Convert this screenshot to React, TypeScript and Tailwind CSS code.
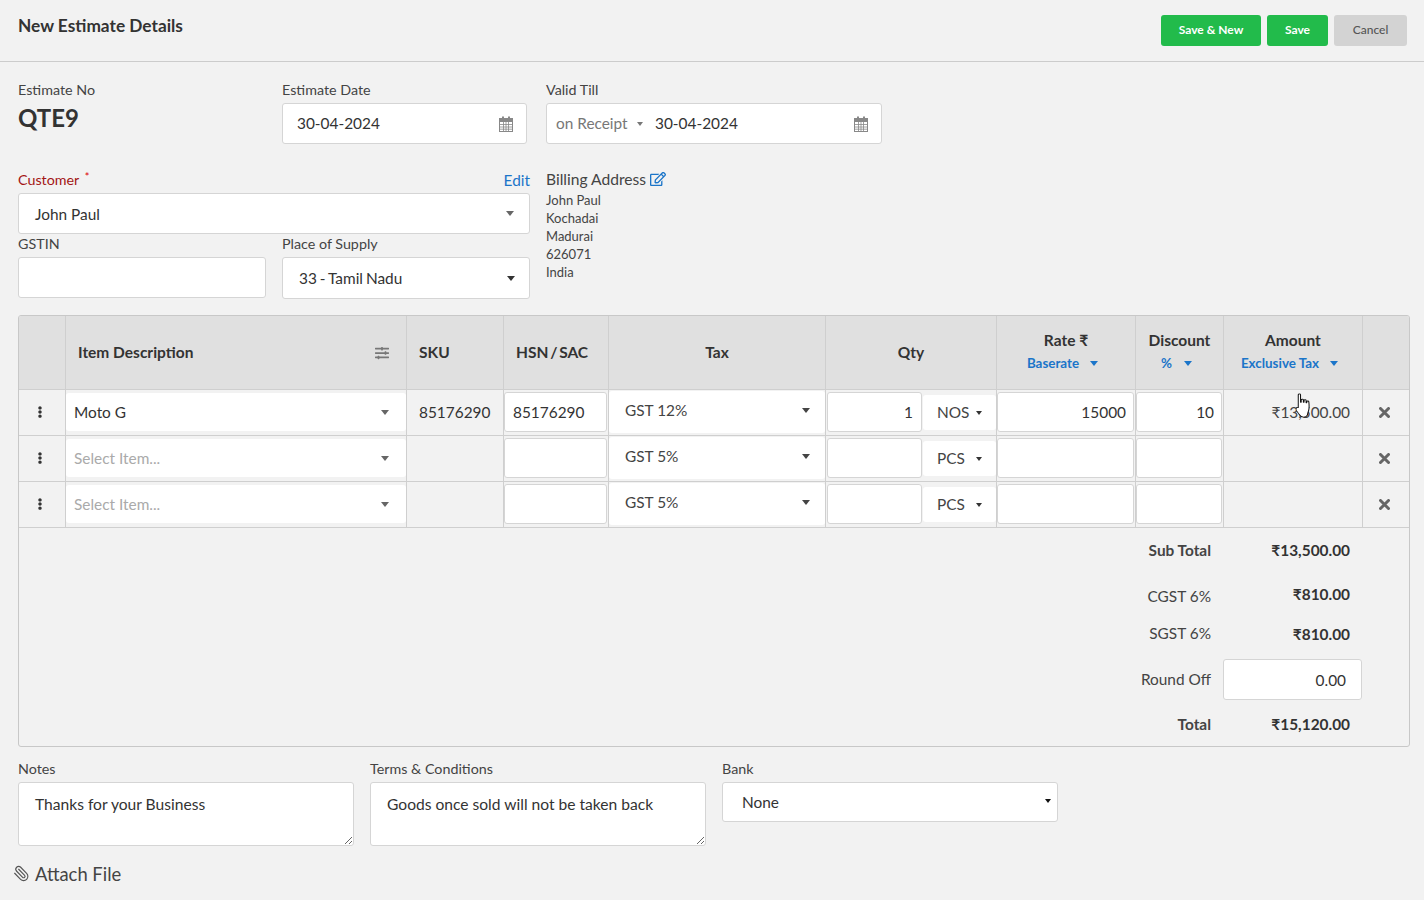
import { ReactNode } from 'react';
import { Paperclip } from 'lucide-react';
import { FaEllipsisV, FaRegEdit, FaSlidersH } from 'react-icons/fa';

const gridCols = 'grid grid-cols-[47px_341px_97px_105px_217px_171px_139px_88px_139px_46px]';
const inputBox = 'bg-white border border-[#d5d5d5] rounded-[3px] outline-none text-[15.4px] text-[#333]';
const bigCaret = 'border-x-[4.5px] border-t-[5px]';
const smallCaret = 'border-x-[3.5px] border-t-[4px]';

const Caret = ({ className }: { className: string }) => (
  <span className={`inline-block w-0 h-0 border-x-transparent ${className}`} />
);

const CalendarIcon = () => (
  <svg width="14" height="16" viewBox="0 0 14 16" className="text-[#888]">
    <rect x="0.5" y="2.5" width="13" height="13" fill="#fff" stroke="currentColor" />
    <rect x="0.5" y="2.5" width="13" height="3" fill="currentColor" stroke="currentColor" />
    <rect x="3" y="0.5" width="2" height="4" fill="currentColor" />
    <rect x="9" y="0.5" width="2" height="4" fill="currentColor" />
    <path d="M4.5 6v9M7 6v9M9.5 6v9M1 8.5h12M1 11h12M1 13.2h12" stroke="currentColor" strokeWidth="0.8" fill="none" />
  </svg>
);

const CloseIcon = () => (
  <svg width="11" height="11" viewBox="0 0 11 11">
    <path d="M1.500 1.500 9.500 9.500M9.500 1.500 1.500 9.500" stroke="#666" strokeWidth="3" strokeLinecap="round" fill="none" />
  </svg>
);

const HandCursor = () => (
  <svg width="17" height="25" viewBox="0 0 15 27" preserveAspectRatio="none" className="absolute left-[1296px] top-[393px]">
    <path
      d="M2 2c0-1.300 2-1.300 2 0v8h.6V7.500c0-1.200 1.900-1.200 1.900 0V10h.6V8c0-1.200 1.800-1.200 1.800 0v2.500h.6V9.500c0-1.200 1.800-1.200 1.800 0 .3 3 .4 7-.2 9.500-.3 1.300-.8 3-1 4.500-.3 1.500-1.500 2.500-3.500 2.500-2.200 0-3-1.200-3.600-2.500-.8-1.700-1.800-3-3-5C-.2 16.500.6 14.800 2 15.700V2z"
      fill="#fff"
      stroke="#111"
      strokeWidth="0.9"
      strokeLinejoin="round"
    />
  </svg>
);

const Label = ({ children, className = '' }: { children: ReactNode; className?: string }) => (
  <div className={`h-[18px] leading-[18px] text-[14.3px] text-[#444] ${className}`}>{children}</div>
);

const Cell = ({ children, className = '' }: { children?: ReactNode; className?: string }) => (
  <div className={`h-[45px] border-r border-[#cfcfcf] last:border-r-0 ${className}`}>{children}</div>
);

const ItemRow = ({ item, sku, hsn, tax, qty, unit, rate, discount, amount }: {
  item?: string; sku?: string; hsn?: string; tax: string; qty?: string; unit: string;
  rate?: string; discount?: string; amount?: ReactNode;
}) => (
  <div className={`${gridCols} border-b border-[#cfcfcf]`}>
    <Cell className="flex items-center justify-center pr-[5px] text-[#333]">
      <FaEllipsisV className="text-[12px] -mt-[1px]" />
    </Cell>
    <Cell>
      <div className="mt-[3px] h-[38px] bg-white rounded-[3px] flex items-center justify-between pl-[8px] pr-[17px]">
        <span className={`mt-[2px] text-[15.4px] ${item ? 'text-[#333]' : 'text-[#aaa]'}`}>{item ?? 'Select Item...'}</span>
        <Caret className={`${bigCaret} border-t-[#666]`} />
      </div>
    </Cell>
    <Cell className="flex items-center pl-[12px] text-[15.4px] text-[#333]">{sku}</Cell>
    <Cell className="pt-[2px]">
      <input readOnly defaultValue={hsn} className={`${inputBox} block h-[40px] w-[103px] px-[8px]`} />
    </Cell>
    <Cell>
      <div className="mt-[1px] h-[42px] bg-white rounded-[3px] flex items-center justify-between pl-[16px] pr-[15px]">
        <span className="text-[15.4px] text-[#444] -mt-[3px]">{tax}</span>
        <Caret className={`${bigCaret} border-t-[#444] -mt-[3px]`} />
      </div>
    </Cell>
    <Cell className="flex items-start">
      <input readOnly defaultValue={qty} className={`${inputBox} mt-[2px] ml-[1px] h-[40px] w-[95px] px-[8px] text-right`} />
      <div className="mt-[5px] ml-[1px] h-[35px] w-[73px] bg-white rounded-[3px] flex items-center pl-[14px] text-[15.4px] text-[#444]">
        <span className="w-[39px]">{unit}</span>
        <Caret className={`${smallCaret} border-t-[#333]`} />
      </div>
    </Cell>
    <Cell className="pt-[2px]">
      <input readOnly defaultValue={rate} className={`${inputBox} block h-[40px] w-[137px] pl-[8px] pr-[7px] text-right`} />
    </Cell>
    <Cell className="pt-[2px]">
      <input readOnly defaultValue={discount} className={`${inputBox} block h-[40px] w-[86px] pl-[8px] pr-[7px] text-right`} />
    </Cell>
    <Cell className="flex items-center justify-end pr-[12px] text-[15.4px] text-[#444]">{amount}</Cell>
    <Cell className="flex items-center justify-center pr-[3px]">
      <CloseIcon />
    </Cell>
  </div>
);

const TotalRow = ({ label, value, height, bold, valueBold, valueShift = '' }: {
  label: string; value: ReactNode; height: string; bold?: boolean; valueBold?: boolean; valueShift?: string;
}) => (
  <div className={`flex justify-end items-center pr-[59px] text-[15.4px] ${height}`}>
    <span className={`${bold ? 'font-bold' : ''} text-[#444]`}>{label}</span>
    <span className={`w-[139px] text-right ${valueBold ? 'font-bold' : ''} text-[#333] ${valueShift}`}>{value}</span>
  </div>
);

export default function App() {
  return (
    <div className="relative h-[900px] w-[1424px] overflow-hidden bg-[#f2f2f2] text-[#333] [font-family:Lato,sans-serif]">
      {/* Header */}
      <div className="h-[62px] border-b border-[#cccccc] flex justify-between pl-[18px] pr-[17px]">
        <h1 className="mt-[14px] text-[17.3px] leading-[24px] font-bold text-[#333]">New Estimate Details</h1>
        <div className="flex gap-[6px] mt-[15px] h-[31px] text-[12px]">
          <button className="w-[100px] pb-[2px] rounded-[3px] bg-[#22bb4b] text-white font-bold">Save &amp; New</button>
          <button className="w-[61px] pb-[2px] rounded-[3px] bg-[#22bb4b] text-white font-bold">Save</button>
          <button className="w-[73px] pb-[2px] rounded-[3px] bg-[#d3d3d3] text-[#555] font-medium">Cancel</button>
        </div>
      </div>

      {/* Estimate no / dates */}
      <div className="flex gap-[16px] pl-[18px] mt-[19px] h-[63px]">
        <div className="w-[248px]">
          <Label>Estimate No</Label>
          <div className="mt-[3px] text-[24px] leading-[32px] font-bold text-[#333]">QTE9</div>
        </div>
        <div className="w-[248px]">
          <Label>Estimate Date</Label>
          <div className={`${inputBox} mt-[4px] h-[41px] w-[245px] flex items-center justify-between pl-[14px] pr-[13px]`}>
            <span>30-04-2024</span>
            <CalendarIcon />
          </div>
        </div>
        <div className="w-[336px]">
          <Label>Valid Till</Label>
          <div className={`${inputBox} mt-[4px] h-[41px] flex items-center pl-[9px] pr-[13px]`}>
            <span className="text-[#777] w-[81px] mt-[1px]">on Receipt</span>
            <Caret className={`${smallCaret} border-t-[#777]`} />
            <span className="ml-[12px] flex-1">30-04-2024</span>
            <CalendarIcon />
          </div>
        </div>
      </div>

      {/* Customer and billing */}
      <div className="flex gap-[16px] pl-[18px] mt-[27px] h-[128px]">
        <div className="w-[512px]">
          <div className="flex justify-between h-[18px] leading-[18px] text-[14.3px]">
            <span className="text-[#a31515]">Customer <sup className="text-[#d00] ml-[2px] text-[11px] -top-[4px]">*</sup></span>
            <span className="text-[15.4px] text-[#1b75c9]">Edit</span>
          </div>
          <div className={`${inputBox} mt-[4px] h-[41px] flex items-center justify-between pl-[16px] pr-[15px]`}>
            <span className="mt-[3px]">John Paul</span>
            <Caret className={`${bigCaret} border-t-[#666]`} />
          </div>
          <div className="flex gap-[16px] mt-[1px]">
            <div className="w-[248px]">
              <Label>GSTIN</Label>
              <input readOnly className={`${inputBox} block mt-[4px] h-[41px] w-full`} />
            </div>
            <div className="w-[248px]">
              <Label>Place of Supply</Label>
              <div className={`${inputBox} mt-[4px] h-[42px] flex items-center justify-between pl-[16px] pr-[14px]`}>
                <span className="mt-[2px] [word-spacing:-1px]">33 - Tamil Nadu</span>
                <Caret className={`${bigCaret} border-t-[#333]`} />
              </div>
            </div>
          </div>
        </div>
        <div className="-mt-[1px]">
          <div className="h-[18px] leading-[18px] text-[15.6px] text-[#444] flex items-center gap-[4px]">
            Billing Address <FaRegEdit className="text-[#1b75c9] text-[16px]" />
          </div>
          <div className="mt-[3px] text-[13px] leading-[18px] text-[#444]">
            <div>John Paul</div>
            <div>Kochadai</div>
            <div>Madurai</div>
            <div>626071</div>
            <div>India</div>
          </div>
        </div>
      </div>

      {/* Items table */}
      <div className="ml-[18px] mt-[16px] w-[1392px] h-[432px] border border-[#c8c8c8] rounded-[3px] overflow-hidden">
        <div className={`${gridCols} bg-[#e0e0e0] border-b border-[#cfcfcf] h-[74px] text-[15.5px] font-bold text-[#333]`}>
          <div className="border-r border-[#cfcfcf]" />
          <div className="border-r border-[#cfcfcf] flex items-center justify-between pl-[12px] pr-[17px]">
            <span>Item Description</span>
            <FaSlidersH className="text-[#777] text-[14px]" />
          </div>
          <div className="border-r border-[#cfcfcf] flex items-center pl-[12px]">SKU</div>
          <div className="border-r border-[#cfcfcf] flex items-center pl-[12px] [word-spacing:-2px]">HSN / SAC</div>
          <div className="border-r border-[#cfcfcf] flex items-center justify-center">Tax</div>
          <div className="border-r border-[#cfcfcf] flex items-center justify-center">Qty</div>
          <div className="border-r border-[#cfcfcf] text-center pt-[14px] leading-[20px]">
            <div>Rate <span className="font-bold">₹</span></div>
            <div className="mt-[3px] pr-[7px] text-[13.4px] text-[#1b75c9] flex items-center justify-center gap-[11px]">
              Baserate <Caret className={`${bigCaret} border-t-[#1b75c9]`} />
            </div>
          </div>
          <div className="border-r border-[#cfcfcf] text-center pt-[14px] leading-[20px]">
            <div>Discount</div>
            <div className="mt-[3px] pr-[6px] text-[13.4px] text-[#1b75c9] flex items-center justify-center gap-[12px]">
              % <Caret className={`${bigCaret} border-t-[#1b75c9]`} />
            </div>
          </div>
          <div className="border-r border-[#cfcfcf] text-center pt-[14px] leading-[20px]">
            <div>Amount</div>
            <div className="mt-[3px] pr-[7px] text-[13.4px] text-[#1b75c9] flex items-center justify-center gap-[11px]">
              Exclusive Tax <Caret className={`${bigCaret} border-t-[#1b75c9]`} />
            </div>
          </div>
          <div />
        </div>
        <ItemRow item="Moto G" sku="85176290" hsn="85176290" tax="GST 12%" qty="1" unit="NOS" rate="15000" discount="10" amount="₹13,500.00" />
        <ItemRow tax="GST 5%" unit="PCS" />
        <ItemRow tax="GST 5%" unit="PCS" />

        <div className="pt-[3px]">
          <TotalRow label="Sub Total" value="₹13,500.00" height="h-[40px]" bold valueBold />
          <TotalRow label="CGST 6%" value="₹810.00" height="h-[40px] mt-[6px]" valueBold valueShift="-mt-[4px]" />
          <TotalRow label="SGST 6%" value="₹810.00" height="h-[34px]" valueBold valueShift="mt-[2px]" />
          <div className="flex justify-end items-center pr-[47px] h-[41px] text-[15.4px] mt-[8px]">
            <span className="text-[#444] mr-[12px]">Round Off</span>
            <input readOnly defaultValue="0.00" className={`${inputBox} block h-[41px] w-[139px] px-[15px] text-right`} />
          </div>
          <TotalRow label="Total" value="₹15,120.00" height="h-[50px]" bold valueBold />
        </div>
      </div>

      {/* Notes, terms, bank */}
      <div className="flex gap-[16px] pl-[18px] mt-[13px]">
        <div className="w-[336px]">
          <Label>Notes</Label>
          <textarea readOnly defaultValue="Thanks for your Business" className={`${inputBox} block mt-[4px] h-[64px] w-full px-[16px] py-[11px] [font-family:'Liberation_Sans',Arial,sans-serif] text-[15.6px] leading-[20px]`} />
        </div>
        <div className="w-[336px]">
          <Label>Terms &amp; Conditions</Label>
          <textarea readOnly defaultValue="Goods once sold will not be taken back" className={`${inputBox} block mt-[4px] h-[64px] w-full px-[16px] py-[11px] [font-family:'Liberation_Sans',Arial,sans-serif] text-[15.6px] leading-[20px]`} />
        </div>
        <div className="w-[336px]">
          <Label>Bank</Label>
          <div className="relative mt-[4px]">
            <select defaultValue="None" className={`${inputBox} block h-[40px] w-full pl-[19px] pt-[2px] appearance-none [font-family:'Liberation_Sans',Arial,sans-serif]`}>
              <option>None</option>
            </select>
            <Caret className={`${smallCaret} border-t-[#111] absolute right-[7px] top-[17px]`} />
          </div>
        </div>
      </div>

      <div className="absolute left-[13px] top-[862px] flex items-center gap-[5px] text-[18.4px] leading-[24px] text-[#444]">
        <Paperclip size={17} strokeWidth={1.6} className="text-[#555] -scale-x-100 -mt-[2px]" />
        Attach File
      </div>

      <HandCursor />
    </div>
  );
}
